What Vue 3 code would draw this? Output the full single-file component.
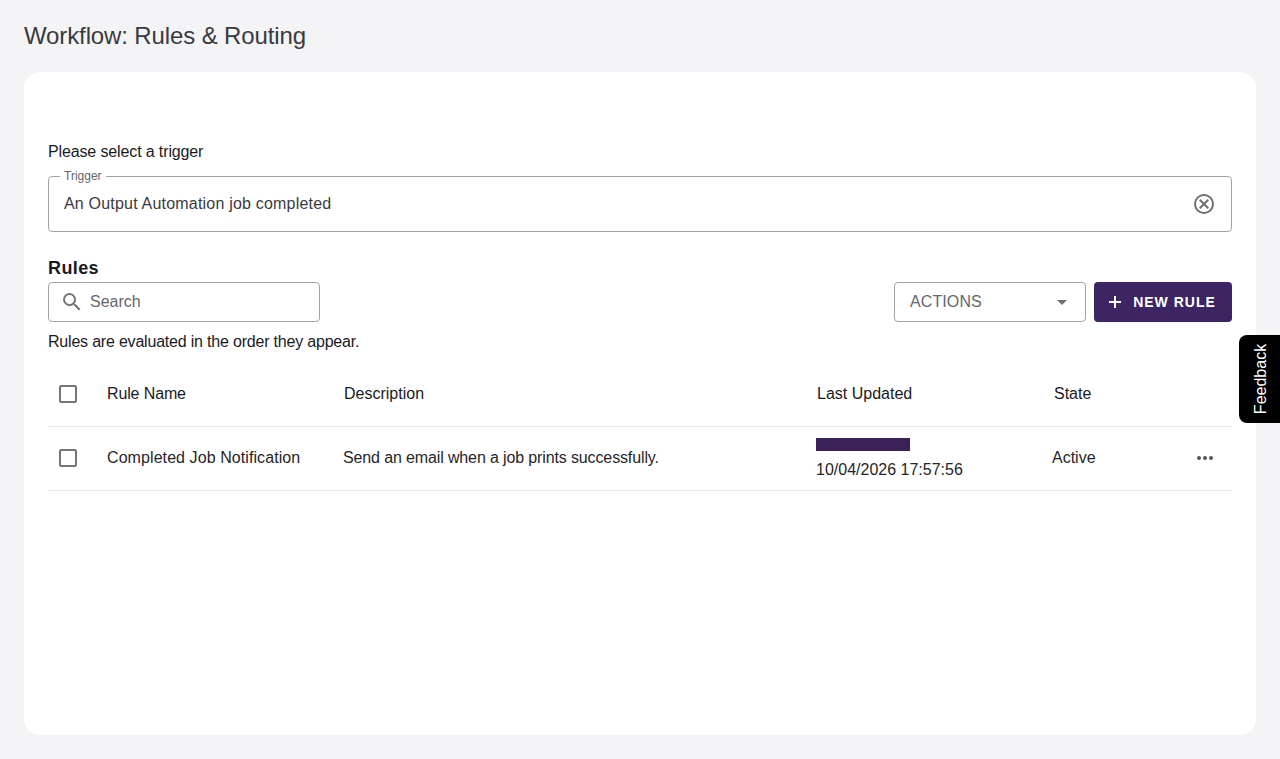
<script setup>
const columns = ['Rule Name', 'Description', 'Last Updated', 'State']
</script>

<template>
  <div class="page">
    <h1 class="title">Workflow: Rules &amp; Routing</h1>
    <main class="card">
      <p class="prompt">Please select a trigger</p>
      <fieldset class="trigger">
        <legend>Trigger</legend>
        <span class="trigger-value">An Output Automation job completed</span>
        <svg class="clear" viewBox="0 0 24 24" width="24" height="24" fill="#6f6f73">
          <path d="M12 2a10 10 0 1 0 0 20 10 10 0 0 0 0-20zm0 18a8 8 0 1 1 0-16 8 8 0 0 1 0 16zm3.6-13L12 10.6 8.4 7 7 8.4l3.6 3.6L7 15.6 8.4 17l3.6-3.6 3.6 3.6 1.4-1.4-3.6-3.6L17 8.4z" />
        </svg>
      </fieldset>

      <h2 class="rules-title">Rules</h2>
      <div class="toolbar">
        <div class="search">
          <svg viewBox="0 0 24 24" width="24" height="24" fill="#757579">
            <path d="M15.5 14h-.79l-.28-.27A6.47 6.47 0 0 0 16 9.5 6.5 6.5 0 1 0 9.5 16c1.61 0 3.09-.59 4.23-1.57l.27.28v.79l5 4.99L20.49 19l-4.99-5zm-6 0C7.01 14 5 11.99 5 9.5S7.01 5 9.5 5 14 7.01 14 9.5 11.99 14 9.5 14z" />
          </svg>
          <span>Search</span>
        </div>
        <div class="actions">
          <span>ACTIONS</span>
          <i class="caret"></i>
        </div>
        <button class="new-rule" type="button">
          <svg viewBox="0 0 12 12" width="12" height="12" fill="#fff"><path d="M5 0h2v5h5v2H7v5H5V7H0V5h5z" /></svg>
          NEW RULE
        </button>
      </div>
      <p class="hint">Rules are evaluated in the order they appear.</p>

      <div class="row head">
        <span class="check"></span>
        <span v-for="c in columns" :key="c" :class="{ tight: c === 'Rule Name' }">{{ c }}</span>
      </div>
      <div class="row body">
        <span class="check"></span>
        <span class="name">Completed Job Notification</span>
        <span class="desc">Send an email when a job prints successfully.</span>
        <div class="updated">
          <i class="redacted"></i>
          <span>10/04/2026 17:57:56</span>
        </div>
        <span class="state">Active</span>
        <svg class="more" viewBox="0 0 18 4" width="18" height="4" fill="#55555a">
          <circle cx="3" cy="2" r="2" /><circle cx="9" cy="2" r="2" /><circle cx="15" cy="2" r="2" />
        </svg>
      </div>
    </main>
    <div class="feedback"><span>Feedback</span></div>
  </div>
</template>

<style scoped>
.page {
  box-sizing: border-box;
  height: 759px;
  padding: 21px 24px 24px;
  background: #f4f4f6;
  font-family: "Liberation Sans", Arial, sans-serif;
  color: #1a1a1e;
  overflow: hidden;
}
.title {
  margin: 0 0 20px;
  height: 31px;
  font-size: 24px;
  line-height: 29px;
  font-weight: 400;
  letter-spacing: -0.12px;
  color: #3a3a40;
}
.card {
  box-sizing: border-box;
  height: 663px;
  padding: 70px 24px 0;
  background: #fff;
  border-radius: 16px;
}
.prompt {
  margin: 0 0 9px;
  font-size: 16px;
  line-height: 20px;
  letter-spacing: -0.13px;
}
.trigger {
  box-sizing: border-box;
  display: flex;
  align-items: center;
  justify-content: space-between;
  height: 61px;
  margin: 0;
  padding: 0 15px 5px;
  border: 1px solid #a3a3a5;
  border-radius: 4px;
  font-size: 16px;
  letter-spacing: 0.2px;
  color: #3a3a40;
}
.trigger legend {
  padding: 0 4px;
  margin-left: -4px;
  font-size: 12px;
  line-height: 11px;
  letter-spacing: 0;
  color: #66666c;
}
.rules-title {
  margin: 25px 0 3px;
  font-size: 18px;
  line-height: 22px;
  font-weight: 700;
  letter-spacing: 0.4px;
}
.toolbar {
  display: flex;
  align-items: stretch;
  height: 40px;
  gap: 8px;
}
.search {
  box-sizing: border-box;
  display: flex;
  align-items: center;
  gap: 6px;
  width: 272px;
  margin-right: auto;
  padding: 0 11px;
  border: 1px solid #a3a3a5;
  border-radius: 4px;
  font-size: 16px;
  color: #66666c;
}
.actions {
  box-sizing: border-box;
  display: flex;
  align-items: center;
  justify-content: space-between;
  width: 192px;
  padding: 0 18px 0 15px;
  border: 1px solid #a3a3a5;
  border-radius: 4px;
  font-size: 16px;
  letter-spacing: 0.1px;
  color: #66666c;
}
.caret {
  border-left: 5px solid transparent;
  border-right: 5px solid transparent;
  border-top: 5px solid #6f6f73;
}
.new-rule {
  display: flex;
  align-items: center;
  justify-content: center;
  gap: 12px;
  width: 138px;
  padding: 0 1px 0 0;
  border: 0;
  border-radius: 4px;
  background: #3d2563;
  color: #fff;
  font-family: inherit;
  font-size: 14px;
  font-weight: 700;
  letter-spacing: 1px;
}
.hint {
  margin: 10px 0 0;
  font-size: 16px;
  line-height: 20px;
  letter-spacing: -0.2px;
}
.row {
  display: grid;
  grid-template-columns: 59px 237px 473px 237px 1fr 46px;
  align-items: center;
  font-size: 16px;
  border-bottom: 1px solid #e6e6e8;
}
.head { height: 75px; padding-top: 9px; box-sizing: border-box; }
.body { height: 64px; padding-bottom: 2px; box-sizing: border-box; color: #26262a; }
.tight { letter-spacing: -0.13px; }
.name { letter-spacing: 0.08px; }
.desc { margin-left: -1px; letter-spacing: -0.13px; }
.state { margin-left: -2px; }
.check {
  box-sizing: border-box;
  width: 18px;
  height: 18px;
  margin-left: 11px;
  border: 2px solid #757579;
  border-radius: 2px;
}
.updated {
  display: flex;
  flex-direction: column;
  align-items: flex-start;
  gap: 10px;
  padding-top: 1px;
  margin-left: -1px;
  line-height: 18px;
}
.redacted {
  width: 94px;
  height: 13px;
  background: #3a2259;
}
.more { justify-self: end; margin-right: 18px; }
.feedback {
  position: fixed;
  right: 0;
  top: 335px;
  box-sizing: border-box;
  width: 41px;
  height: 88px;
  padding-left: 3px;
  display: flex;
  align-items: center;
  justify-content: center;
  background: #000;
  border-radius: 8px 0 0 8px;
  color: #fff;
  font-size: 16px;
}
.feedback span {
  transform: rotate(-90deg);
  white-space: nowrap;
}
</style>
